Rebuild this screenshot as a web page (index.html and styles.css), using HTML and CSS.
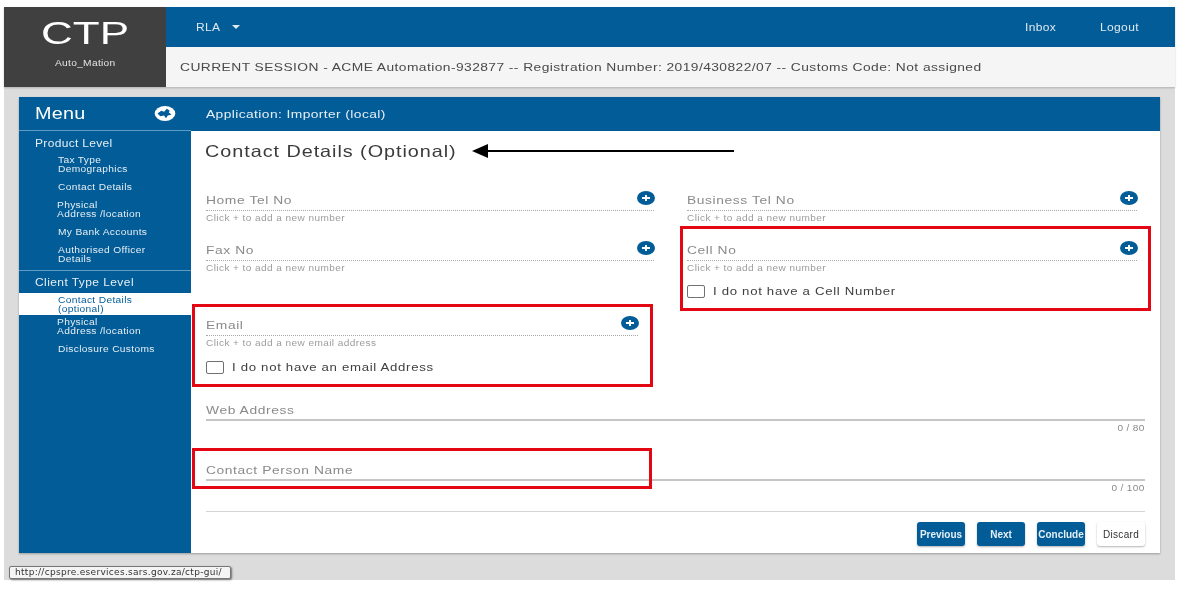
FILE: index.html
```html
<!DOCTYPE html>
<html lang="en">
<head>
<meta charset="utf-8">
<title>CTP - Contact Details</title>
<link rel="stylesheet" href="styles.css">
</head>
<body>
<div class="shell">
  <header class="top">
    <div class="brand">
      <div class="brand-name"><span class="brand-text">CTP</span></div>
      <div class="brand-user"><span class="wx mid">Auto_Mation</span></div>
    </div>
    <div class="top-main">
      <nav class="nav">
        <span class="nav-item wx">RLA</span><span class="caret"></span>
        <span class="nav-right">
          <span class="nav-item wx">Inbox</span>
          <span class="nav-item wx">Logout</span>
        </span>
      </nav>
      <div class="session"><span class="wx">CURRENT SESSION - ACME Automation-932877 -- Registration Number: 2019/430822/07 -- Customs Code: Not assigned</span></div>
    </div>
  </header>

  <main class="workspace">
    <aside class="sidebar">
      <div class="menu-head">
        <span class="menu-title wx">Menu</span>
        <svg class="globe" viewBox="0 0 22 16" aria-hidden="true">
          <ellipse cx="11" cy="8" rx="11" ry="8" fill="#fff"/>
          <path d="M3 8 L7 5 L10 6 L13 3 L16 5 L15 7 L18 9 L14 10 L12 13 L10 10 L6 11 Z" fill="#015c97"/>
        </svg>
      </div>
      <div class="side-group">
        <div class="side-head"><span class="wx">Product Level</span></div>
        <a class="side-link s1"><span class="wx">Tax Type<br>Demographics</span></a>
        <a class="side-link s2"><span class="wx">Contact Details</span></a>
        <a class="side-link s3"><span class="wx">Physical<br>Address /location</span></a>
        <a class="side-link s2"><span class="wx">My Bank Accounts</span></a>
        <a class="side-link s2"><span class="wx">Authorised Officer<br>Details</span></a>
      </div>
      <div class="side-group second">
        <div class="side-head big"><span class="wx">Client Type Level</span></div>
        <a class="side-link active"><span class="wx">Contact Details<br>(optional)</span></a>
        <a class="side-link s3 after-active"><span class="wx">Physical<br>Address /location</span></a>
        <a class="side-link s2"><span class="wx">Disclosure Customs</span></a>
      </div>
    </aside>

    <section class="panel">
      <div class="panel-head"><span class="wx">Application: Importer (local)</span></div>
      <div class="panel-body">
        <h1 class="title"><span class="wx">Contact Details (Optional)</span></h1>
        <div class="columns">
          <div class="col col-left">
            <div class="field">
              <div class="label"><span class="wx">Home Tel No</span></div>
              <svg class="plus" viewBox="0 0 18 14" aria-hidden="true"><ellipse cx="9" cy="7" rx="9" ry="7" fill="#015c97"/><path d="M5 7H13M9 4V10" stroke="#fff" stroke-width="2"/></svg>
              <div class="hint"><span class="wx">Click + to add a new number</span></div>
            </div>
            <div class="field">
              <div class="label"><span class="wx">Fax No</span></div>
              <svg class="plus" viewBox="0 0 18 14" aria-hidden="true"><ellipse cx="9" cy="7" rx="9" ry="7" fill="#015c97"/><path d="M5 7H13M9 4V10" stroke="#fff" stroke-width="2"/></svg>
              <div class="hint"><span class="wx">Click + to add a new number</span></div>
            </div>
            <div class="field email">
              <div class="label"><span class="wx">Email</span></div>
              <svg class="plus" viewBox="0 0 18 14" aria-hidden="true"><ellipse cx="9" cy="7" rx="9" ry="7" fill="#015c97"/><path d="M5 7H13M9 4V10" stroke="#fff" stroke-width="2"/></svg>
              <div class="hint"><span class="wx">Click + to add a new email address</span></div>
            </div>
            <div class="check"><span class="box"></span><span class="wx">I do not have an email Address</span></div>
          </div>
          <div class="col col-right">
            <div class="field">
              <div class="label"><span class="wx">Business Tel No</span></div>
              <svg class="plus" viewBox="0 0 18 14" aria-hidden="true"><ellipse cx="9" cy="7" rx="9" ry="7" fill="#015c97"/><path d="M5 7H13M9 4V10" stroke="#fff" stroke-width="2"/></svg>
              <div class="hint"><span class="wx">Click + to add a new number</span></div>
            </div>
            <div class="field">
              <div class="label"><span class="wx">Cell No</span></div>
              <svg class="plus" viewBox="0 0 18 14" aria-hidden="true"><ellipse cx="9" cy="7" rx="9" ry="7" fill="#015c97"/><path d="M5 7H13M9 4V10" stroke="#fff" stroke-width="2"/></svg>
              <div class="hint"><span class="wx">Click + to add a new number</span></div>
            </div>
            <div class="check"><span class="box"></span><span class="wx">I do not have a Cell Number</span></div>
          </div>
        </div>
        <div class="line-field">
          <div class="label"><span class="wx">Web Address</span></div>
          <div class="counter"><span class="wx end">0 / 80</span></div>
        </div>
        <div class="line-field">
          <div class="label"><span class="wx">Contact Person Name</span></div>
          <div class="counter"><span class="wx end">0 / 100</span></div>
        </div>
        <div class="actions">
          <button class="btn">Previous</button>
          <button class="btn">Next</button>
          <button class="btn">Conclude</button>
          <button class="btn plain">Discard</button>
        </div>
      </div>
    </section>
  </main>

  <div class="mark mark-cell"></div>
  <div class="mark mark-email"></div>
  <div class="mark mark-person"></div>
  <svg class="arrow" viewBox="0 0 262 16" aria-hidden="true"><path d="M14 8H262" stroke="#000" stroke-width="2"/><path d="M0 8L16 1V15Z" fill="#000"/></svg>
  <div class="tooltip">http://cpspre.eservices.sars.gov.za/ctp-gui/</div>
</div>
</body>
</html>
```
FILE: styles.css
```css
* { box-sizing: border-box; }
html, body { margin: 0; padding: 0; background: #fff; }
body { width: 1177px; height: 591px; overflow: hidden; padding: 7px 2px 11px 4px; font-family: "Liberation Sans", Arial, sans-serif; }
.shell { position: relative; height: 573px; background: #dcdcdc; filter: blur(0.4px); }

/* the source shot is stretched horizontally, so text is widened the same way */
.wx { display: inline-block; transform: scaleX(1.2); transform-origin: left center; white-space: nowrap; }
.wx.mid { transform-origin: center; }
.wx.end { transform-origin: right center; }

.top { display: flex; height: 80px; box-shadow: 0 1px 2px rgba(0,0,0,.2); }
.brand { width: 162px; background: #404040; color: #fff; text-align: center; }
.brand-name { font-size: 31px; line-height: 34px; padding-top: 10px; height: 44px; }
.brand-text { display: inline-block; transform: scaleX(1.42); }
.brand-user { font-size: 8.5px; line-height: 12px; margin-top: 6px; color: #e4e4e4; letter-spacing: .25px; }
.top-main { flex: 1; display: flex; flex-direction: column; }
.nav { height: 40px; background: #015c97; color: #dfe9f1; display: flex; align-items: center; padding: 0 43px 0 30px; font-size: 10px; }
.nav-item { letter-spacing: .3px; }
.caret { margin-left: 16px; margin-top: -1px; border-left: 4px solid transparent; border-right: 4px solid transparent; border-top: 4px solid #dfe9f1; }
.nav-right { margin-left: auto; display: flex; gap: 49px; }
.session { height: 40px; background: #f5f5f5; color: #4a4a4a; font-size: 11.5px; line-height: 40px; padding-left: 14px; letter-spacing: .36px; white-space: nowrap; }

.workspace { display: flex; margin: 10px 15px 0; height: 456px; box-shadow: 0 1px 2px rgba(0,0,0,.3); }
.sidebar { width: 172px; background: #015c97; color: #e6eef5; }
.menu-head { height: 34px; display: flex; align-items: center; justify-content: space-between; padding: 0 15px 0 16px; border-bottom: 1px solid #5f9cc4; }
.menu-title { font-size: 16.5px; color: #fff; letter-spacing: .2px; }
.globe { width: 22px; height: 15px; }
.side-group { padding-top: 7px; height: 140px; border-bottom: 1px solid #5f9cc4; }
.side-group.second { height: auto; border-bottom: 0; padding-top: 6px; }
.side-head { font-size: 10px; line-height: 12px; padding-left: 16px; letter-spacing: .27px; }
.side-head.big { letter-spacing: .35px; padding-bottom: 4px; }
.side-link { display: block; font-size: 8.5px; line-height: 9px; padding-left: 39px; letter-spacing: .28px; }
.s1 { margin-top: 6px; }
.s2 { margin-top: 9px; }
.s3 { margin-top: 9px; padding-left: 38px; }
.active { background: #fff; color: #015c97; height: 22px; padding-top: 3px; padding-left: 39px; }
.after-active { margin-top: 3px; }

.panel { flex: 1; display: flex; flex-direction: column; background: #fff; }
.panel-head { height: 34px; background: #015c97; color: #e6eef5; font-size: 11.5px; line-height: 34px; padding-left: 15px; letter-spacing: .34px; }
.panel-body { flex: 1; padding: 0 15px; display: flex; flex-direction: column; }
.title { margin: 0 0 0 -1px; height: 56px; padding-top: 10px; font-size: 16.5px; line-height: 20px; font-weight: 400; color: #3b3b3b; letter-spacing: .8px; }
.columns { display: flex; height: 210px; }
.col-left { width: 481px; }
.col-right { width: 450px; }
.field { position: relative; height: 50px; width: 448px; }
.col-right .field { width: 450px; }
.field.email { margin-top: 25px; width: 432px; height: 46px; }
.label { font-size: 11.5px; line-height: 24px; height: 24px; color: #8a8a8a; letter-spacing: .5px; padding-top: 1px; }
.field .label { border-bottom: 1px dotted #a8a8a8; }
.plus { position: absolute; right: -1px; top: 4px; width: 18px; height: 14px; }
.hint { font-size: 8.4px; line-height: 15px; color: #9c9c9c; letter-spacing: .35px; }
.check { display: flex; align-items: center; gap: 8px; font-size: 11px; color: #404040; letter-spacing: .57px; height: 20px; margin-top: -1px; }
.col-right .check { margin-top: -6px; }
.box { width: 18px; height: 13px; border: 1px solid #707070; border-radius: 2px; background: #fff; flex: none; }
.line-field { height: 60px; }
.line-field .label { border-bottom: 2px solid #c8c6c4; height: 24px; }
.counter { text-align: right; font-size: 8.4px; line-height: 14px; color: #8a8a8a; letter-spacing: .3px; }
.actions { display: flex; justify-content: flex-end; gap: 12px; margin-top: -6px; border-top: 1px solid #d5d5d5; padding-top: 10px; }
.btn { width: 48px; height: 24px; padding: 0; border: 0; border-radius: 3px; background: #015c97; color: #e6eef5; font: 700 10px "Liberation Sans", Arial, sans-serif; box-shadow: 0 1px 2px rgba(0,0,0,.3); white-space: nowrap; }
.btn.plain { background: #fff; color: #333; font-weight: 400; letter-spacing: .3px; }

.mark { position: absolute; border: 3px solid #e30613; }
.mark-cell { left: 676px; top: 219px; width: 471px; height: 85px; }
.mark-email { left: 188px; top: 297px; width: 461px; height: 83px; }
.mark-person { left: 188px; top: 441px; width: 460px; height: 41px; }
.arrow { position: absolute; left: 468px; top: 136px; width: 262px; height: 16px; }
.tooltip { position: absolute; left: 5px; top: 559px; width: 222px; height: 13px; background: #f4f4f4; border: 1px solid #777; border-radius: 2px; box-shadow: 1px 1px 2px rgba(0,0,0,.5); font: 9px/11px "DejaVu Sans", sans-serif; color: #333; padding-left: 5px; letter-spacing: .3px; white-space: nowrap; overflow: hidden; }
```
